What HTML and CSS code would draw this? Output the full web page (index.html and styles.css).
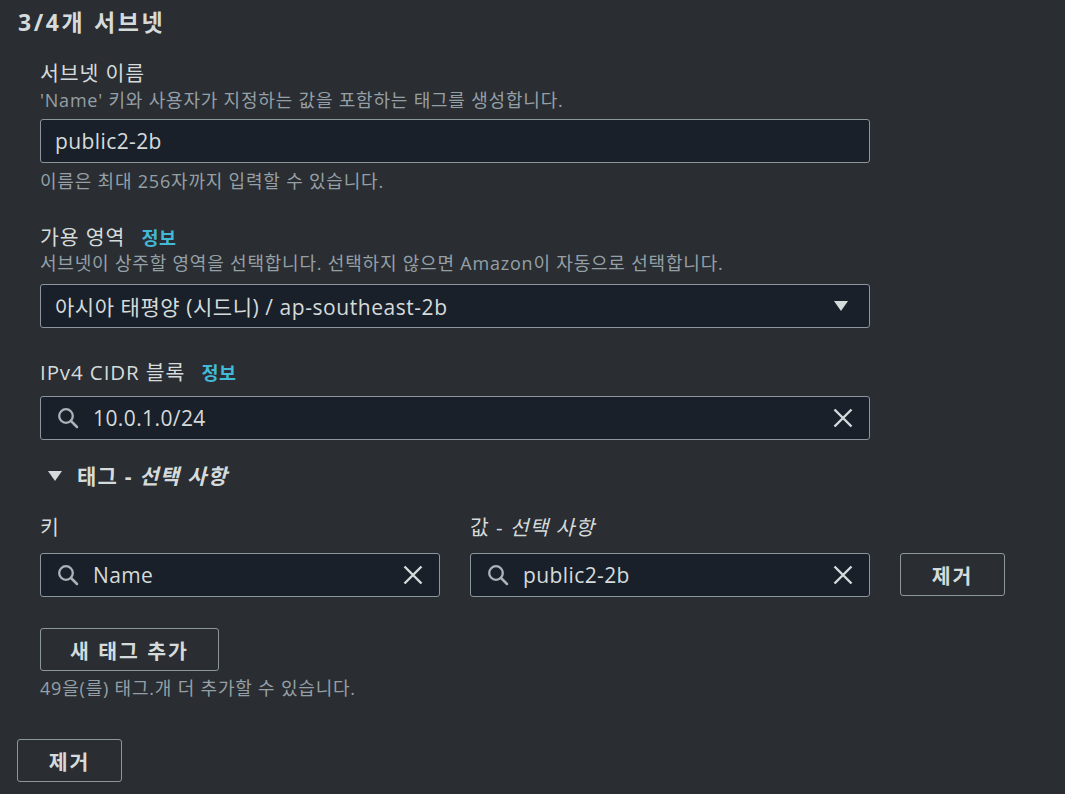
FILE: index.html
```html
<!DOCTYPE html>
<html lang="ko">
<head>
<meta charset="utf-8">
<title>서브넷</title>
<link rel="stylesheet" href="styles.css">
</head>
<body>
<div class="page">
  <h2 class="title">3/4개 서브넷</h2>
  <div class="fields">
    <div class="field f-name">
      <div class="label">서브넷 이름</div>
      <div class="desc">'Name' 키와 사용자가 지정하는 값을 포함하는 태그를 생성합니다.</div>
      <div class="input wide"><span class="value plain">public2-2b</span></div>
      <div class="hint">이름은 최대 256자까지 입력할 수 있습니다.</div>
    </div>

    <div class="field f-az">
      <div class="label">가용 영역 <a class="info">정보</a></div>
      <div class="desc">서브넷이 상주할 영역을 선택합니다. 선택하지 않으면 Amazon이 자동으로 선택합니다.</div>
      <div class="input wide select">
        <span class="value plain">아시아 태평양 (시드니) / ap-southeast-2b</span>
        <svg class="caret" width="14" height="10" viewBox="0 0 14 10"><path d="M0 0 H14 L7 10 Z" fill="#d5dbdb"/></svg>
      </div>
    </div>

    <div class="field f-cidr">
      <div class="label">IPv4 CIDR 블록 <a class="info">정보</a></div>
      <div class="input wide">
        <svg class="search" width="22" height="22" viewBox="0 0 22 22"><circle cx="9" cy="9" r="6.8" fill="none" stroke="#aab4b8" stroke-width="2.3"/><path d="M14 14 L20 20" stroke="#aab4b8" stroke-width="2.5" stroke-linecap="round"/></svg>
        <span class="value">10.0.1.0/24</span>
        <svg class="clear" width="20" height="20" viewBox="0 0 20 20"><path d="M1.5 1.5 L18.5 18.5 M18.5 1.5 L1.5 18.5" stroke="#d5dbdb" stroke-width="2.4"/></svg>
      </div>
    </div>

    <div class="tags-head">
      <svg class="tri" width="14" height="10" viewBox="0 0 14 10"><path d="M0 0 H14 L7 10 Z" fill="#d5dbdb"/></svg>
      <span class="tags-title">태그 - <em>선택 사항</em></span>
    </div>

    <div class="tag-row">
      <div class="tag-col">
        <div class="label">키</div>
        <div class="input half">
          <svg class="search" width="22" height="22" viewBox="0 0 22 22"><circle cx="9" cy="9" r="6.8" fill="none" stroke="#aab4b8" stroke-width="2.3"/><path d="M14 14 L20 20" stroke="#aab4b8" stroke-width="2.5" stroke-linecap="round"/></svg>
          <span class="value">Name</span>
          <svg class="clear" width="20" height="20" viewBox="0 0 20 20"><path d="M1.5 1.5 L18.5 18.5 M18.5 1.5 L1.5 18.5" stroke="#d5dbdb" stroke-width="2.4"/></svg>
        </div>
      </div>
      <div class="tag-col">
        <div class="label">값 - <em>선택 사항</em></div>
        <div class="input half">
          <svg class="search" width="22" height="22" viewBox="0 0 22 22"><circle cx="9" cy="9" r="6.8" fill="none" stroke="#aab4b8" stroke-width="2.3"/><path d="M14 14 L20 20" stroke="#aab4b8" stroke-width="2.5" stroke-linecap="round"/></svg>
          <span class="value">public2-2b</span>
          <svg class="clear" width="20" height="20" viewBox="0 0 20 20"><path d="M1.5 1.5 L18.5 18.5 M18.5 1.5 L1.5 18.5" stroke="#d5dbdb" stroke-width="2.4"/></svg>
        </div>
      </div>
      <button class="btn btn-remove-tag">제거</button>
    </div>

    <button class="btn btn-add">새 태그 추가</button>
    <div class="hint count">49을(를) 태그.개 더 추가할 수 있습니다.</div>
  </div>
  <button class="btn btn-remove">제거</button>
</div>
</body>
</html>
```

FILE: styles.css
```css
html, body {
  margin: 0;
  padding: 0;
  background: #2a2d32;
}
body {
  font-family: "Open Sans", "Noto Sans CJK KR", sans-serif;
  color: #d5dbdb;
  width: 1065px;
  height: 794px;
  overflow: hidden;
}
.page {
  padding: 10px 0 0 17px;
}
.title {
  margin: 0 0 0 1px;
  font-size: 23px;
  line-height: 24px;
  font-weight: 700;
  letter-spacing: 2.6px;
}
.fields {
  padding-left: 23px;
  display: flex;
  flex-direction: column;
  align-items: flex-start;
}
.label {
  font-size: 20.5px;
  line-height: 26px;
  letter-spacing: 0.9px;
  color: #d5dbdb;
}
.label em {
  font-style: italic;
}
.info {
  color: #44b9d6;
  font-weight: 700;
  font-size: 18.5px;
  letter-spacing: 0.5px;
  margin-left: 10px;
}
.desc, .hint {
  font-size: 18px;
  line-height: 22px;
  color: #95a0a6;
  letter-spacing: 0.8px;
}
.f-name { margin-top: 26px; }
.f-name .desc { margin-top: 3px; }
.f-name .input { margin-top: 8px; }
.f-name .hint { margin-top: 7px; }
.f-az { margin-top: 32px; }
.f-az .desc { margin-top: 1px; }
.f-az .input { margin-top: 10px; }
.f-cidr { margin-top: 31px; }
.f-cidr .input { margin-top: 10px; }

.input {
  box-sizing: border-box;
  height: 44px;
  background: #1a2029;
  border: 1px solid #8b979c;
  border-radius: 3px;
  display: flex;
  align-items: center;
  padding: 0 16px 0 14px;
  font-size: 21px;
  letter-spacing: 0.4px;
  color: #d5dbdb;
}
.input.wide { width: 830px; }
.input.half { width: 400px; }
.input .value { flex: 1; white-space: nowrap; }
.select .value { letter-spacing: 0.55px; }
.input .search { margin: 0 14px 0 2px; flex: none; }
.input .clear { flex: none; }
.select .caret { flex: none; margin-right: 5px; }

.tags-head {
  margin-top: 23px;
  display: flex;
  align-items: center;
  height: 26px;
  margin-left: 8px;
}
.tags-head .tri { margin-right: 15px; }
.tags-title {
  font-size: 21px;
  font-weight: 700;
  line-height: 26px;
  letter-spacing: 1.2px;
}
.tags-title em { font-style: italic; }

.tag-row {
  margin-top: 25px;
  display: flex;
  align-items: flex-end;
  gap: 30px;
}
.tag-col .input { margin-top: 13px; }

.btn {
  box-sizing: border-box;
  height: 43px;
  background: transparent;
  border: 1px solid #8b979c;
  border-radius: 3px;
  color: #d5dbdb;
  font-family: "Open Sans", "Noto Sans CJK KR", sans-serif;
  font-size: 20.5px;
  font-weight: 700;
  letter-spacing: 2px;
  padding: 0;
  cursor: pointer;
}
.btn-remove-tag { width: 105px; margin-bottom: 1px; }
.btn-add { width: 179px; margin-top: 31px; }
.count { margin-top: 6px; }
.btn-remove { width: 105px; margin-top: 40px; }
```
